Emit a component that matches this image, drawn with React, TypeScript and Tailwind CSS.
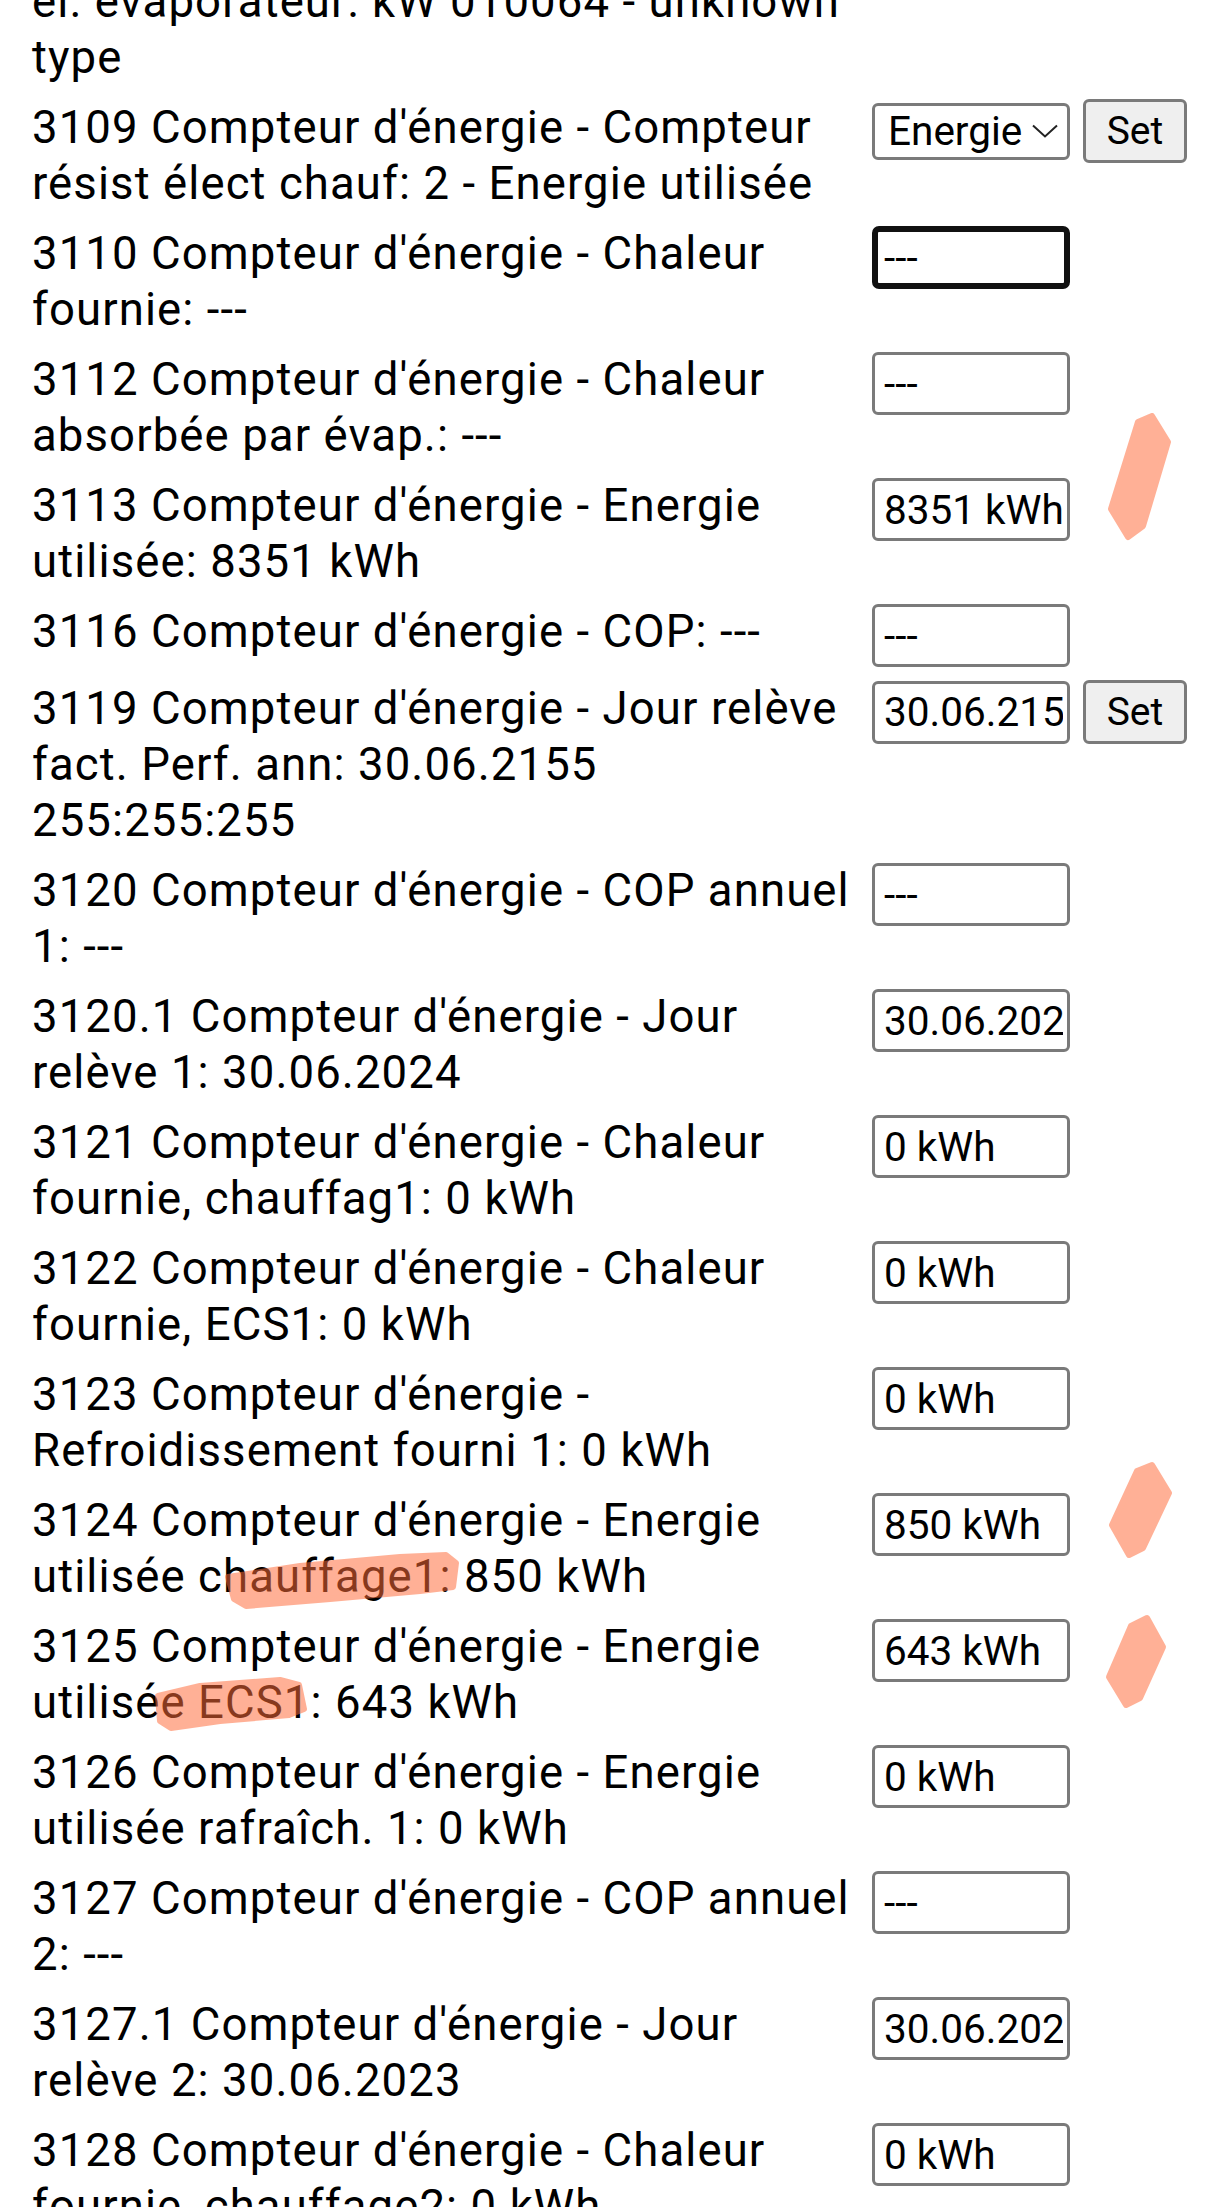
import React from "react";

type Row = {
  text: string;
  value?: string;
  kind?: "input" | "focused" | "select" | "inputset" | "none";
};

const rows: Row[] = [
  { text: "él. évaporateur: kW 010064 - unknown type", kind: "none" },
  { text: "3109 Compteur d'énergie - Compteur résist élect chauf: 2 - Energie utilisée", kind: "select", value: "Energie" },
  { text: "3110 Compteur d'énergie - Chaleur fournie: ---", kind: "focused", value: "---" },
  { text: "3112 Compteur d'énergie - Chaleur absorbée par évap.: ---", value: "---" },
  { text: "3113 Compteur d'énergie - Energie utilisée: 8351 kWh", value: "8351 kWh" },
  { text: "3116 Compteur d'énergie - COP: ---", value: "---" },
  { text: "3119 Compteur d'énergie - Jour relève fact. Perf. ann: 30.06.2155 255:255:255", kind: "inputset", value: "30.06.2155 255:255:255" },
  { text: "3120 Compteur d'énergie - COP annuel 1: ---", value: "---" },
  { text: "3120.1 Compteur d'énergie - Jour relève 1: 30.06.2024", value: "30.06.2024" },
  { text: "3121 Compteur d'énergie - Chaleur fournie, chauffag1: 0 kWh", value: "0 kWh" },
  { text: "3122 Compteur d'énergie - Chaleur fournie, ECS1: 0 kWh", value: "0 kWh" },
  { text: "3123 Compteur d'énergie - Refroidissement fourni 1: 0 kWh", value: "0 kWh" },
  { text: "3124 Compteur d'énergie - Energie utilisée chauffage1: 850 kWh", value: "850 kWh" },
  { text: "3125 Compteur d'énergie - Energie utilisée ECS1: 643 kWh", value: "643 kWh" },
  { text: "3126 Compteur d'énergie - Energie utilisée rafraîch. 1: 0 kWh", value: "0 kWh" },
  { text: "3127 Compteur d'énergie - COP annuel 2: ---", value: "---" },
  { text: "3127.1 Compteur d'énergie - Jour relève 2: 30.06.2023", value: "30.06.2023" },
  { text: "3128 Compteur d'énergie - Chaleur fournie, chauffage2: 0 kWh", value: "0 kWh" },
];

function TextInput({ value, focused }: { value: string; focused?: boolean }) {
  return (
    <input
      readOnly
      value={value}
      className={
        focused
          ? "box-border block w-[198px] h-[63px] rounded-[7px] border-[6px] border-[#111111] bg-white pl-[6px] pr-[2px] text-[40.5px] text-black outline-none font-[family-name:Roboto,sans-serif]"
          : "box-border block w-[198px] h-[63px] rounded-[6px] border-[3px] border-[#7a7a7a] bg-white pl-[9px] pr-[4px] text-[40.5px] text-black outline-none font-[family-name:Roboto,sans-serif]"
      }
    />
  );
}

function SetButton() {
  return (
    <button className="box-border block w-[104px] h-[64px] rounded-[6px] border-[3px] border-[#7a7a7a] bg-[#efefef] text-[39px] text-black font-[family-name:Roboto,sans-serif]">
      Set
    </button>
  );
}

function SelectBox({ value }: { value: string }) {
  return (
    <div className="relative w-[198px] h-[57px]">
      <select
        defaultValue={value}
        className="box-border block w-[198px] h-[57px] appearance-none rounded-[6px] border-[3px] border-[#7a7a7a] bg-white pl-[13px] text-[40.5px] leading-[50px] text-black outline-none font-[family-name:Roboto,sans-serif]"
      >
        <option>Energie</option>
        <option>Chaleur</option>
      </select>
      <svg
        className="pointer-events-none absolute left-[160px] top-[21px]"
        width="26"
        height="14"
        viewBox="0 0 26 14"
        fill="none"
      >
        <path d="M1 1.5 L13 12.5 L25 1.5" stroke="#222" strokeWidth="2" />
      </svg>
    </div>
  );
}

function Controls({ row }: { row: Row }) {
  const kind = row.kind ?? "input";
  if (kind === "none") return null;
  if (kind === "select") {
    return (
      <div className="ml-[12px] mt-[-1px] flex items-center gap-[13px]">
        <SelectBox value={row.value ?? ""} />
        <SetButton />
      </div>
    );
  }
  if (kind === "inputset") {
    return (
      <div className="ml-[12px] mt-[-1px] flex items-center gap-[13px]">
        <TextInput value={row.value ?? ""} />
        <SetButton />
      </div>
    );
  }
  return (
    <div className="ml-[12px] mt-[0px] flex">
      <TextInput value={row.value ?? ""} focused={kind === "focused"} />
    </div>
  );
}

export default function App() {
  return (
    <div className="relative w-[1220px] min-h-[2207px] overflow-hidden bg-white text-black font-[family-name:Roboto,sans-serif]">
      <div className="mt-[-26px] flex flex-col gap-[14px] pl-[32px]">
        {rows.map((r, i) => (
          <div key={i} className="flex items-start">
            <div className="w-[828px] text-[45.5px] leading-[56px] tracking-[1.1px]">{r.text}</div>
            <Controls row={r} />
          </div>
        ))}
      </div>

      {/* highlighter marks drawn over the page */}
      <svg
        className="pointer-events-none absolute left-0 top-0"
        width="1220"
        height="2207"
        viewBox="0 0 1220 2207"
      >
        <g opacity="0.53" fill="rgb(255,108,58)" stroke="rgb(255,108,58)" strokeWidth="6" strokeLinejoin="round">
          <polygon points="1152,416 1168,442 1143,526 1128,537 1111,509 1138,422" />
          <polygon points="1152,1465 1169,1493 1143,1548 1129,1555 1112,1525 1137,1471" />
          <polygon points="1147,1618 1163,1647 1140,1698 1126,1705 1109,1677 1131,1626" />
          <polygon points="228,1577 300,1566 400,1557 446,1555 456,1563 453,1587 420,1591 330,1599 246,1606 234,1599" />
          <polygon points="158,1696 200,1686 280,1680 299,1685 304,1709 289,1715 220,1721 171,1728 160,1721" />
        </g>
      </svg>
    </div>
  );
}
